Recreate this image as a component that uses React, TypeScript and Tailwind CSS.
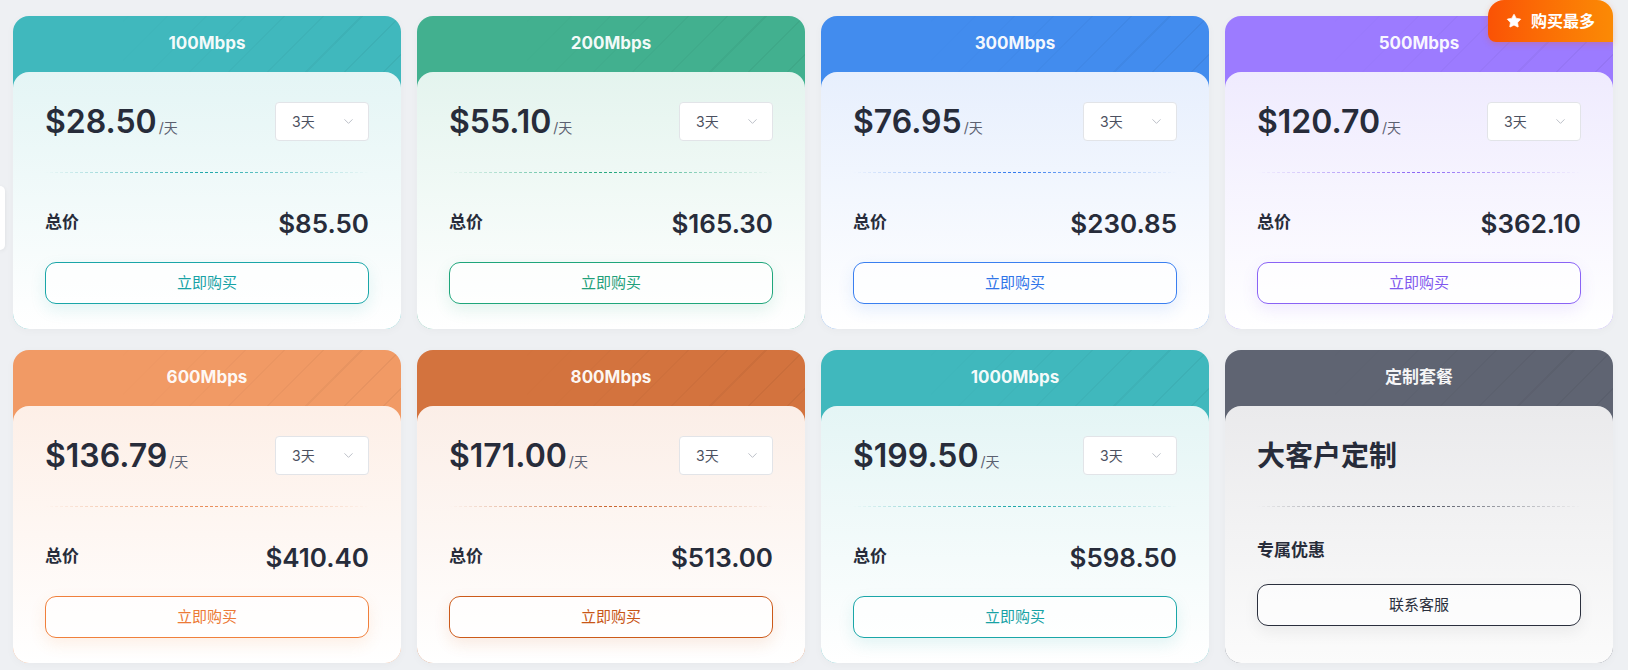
import { ChevronDown, Star } from "lucide-react";

type Theme = {
  head: string;
  body: string;
  line: string;
  btn: string;
};

const themes: Record<string, Theme> = {
  teal: {
    head: "bg-[#40b8bd]",
    body: "bg-linear-to-b from-[#e4f5f5] to-white",
    line: "bg-[repeating-linear-gradient(90deg,#1aa6a8_0_3px,transparent_3px_5px)]",
    btn: "border-[#1aa6a8] text-[#17a2a5] shadow-[0_6px_16px_rgba(26,166,168,0.12)]",
  },
  green: {
    head: "bg-[#42b08f]",
    body: "bg-linear-to-b from-[#e4f4ee] to-white",
    line: "bg-[repeating-linear-gradient(90deg,#1fa67b_0_3px,transparent_3px_5px)]",
    btn: "border-[#1fa67b] text-[#1fa07a] shadow-[0_6px_16px_rgba(31,166,123,0.12)]",
  },
  blue: {
    head: "bg-[#428cee]",
    body: "bg-linear-to-b from-[#e7effd] to-white",
    line: "bg-[repeating-linear-gradient(90deg,#2f78ee_0_3px,transparent_3px_5px)]",
    btn: "border-[#3a7ff0] text-[#2f74e8] shadow-[0_6px_16px_rgba(47,120,238,0.12)]",
  },
  purple: {
    head: "bg-[#9c7bff]",
    body: "bg-linear-to-b from-[#efebfe] to-white",
    line: "bg-[repeating-linear-gradient(90deg,#8a63f5_0_3px,transparent_3px_5px)]",
    btn: "border-[#8a63f5] text-[#8058ee] shadow-[0_6px_16px_rgba(138,99,245,0.12)]",
  },
  orange: {
    head: "bg-[#f19a65]",
    body: "bg-linear-to-b from-[#fdefe7] to-white",
    line: "bg-[repeating-linear-gradient(90deg,#e98a55_0_3px,transparent_3px_5px)]",
    btn: "border-[#f0803c] text-[#ec7a36] shadow-[0_6px_16px_rgba(240,128,60,0.12)]",
  },
  rust: {
    head: "bg-[#d3733e]",
    body: "bg-linear-to-b from-[#fbeee7] to-white",
    line: "bg-[repeating-linear-gradient(90deg,#c8632c_0_3px,transparent_3px_5px)]",
    btn: "border-[#cc5a1a] text-[#c85616] shadow-[0_6px_16px_rgba(204,90,26,0.12)]",
  },
  gray: {
    head: "bg-[#5f6472]",
    body: "bg-linear-to-b from-[#eaeaec] to-[#fbfbfb]",
    line: "bg-[repeating-linear-gradient(90deg,#4b4f5c_0_3px,transparent_3px_5px)]",
    btn: "border-[#2a2f3d] text-[#2a2f3d] shadow-[0_6px_16px_rgba(0,0,0,0.06)]",
  },
};

const plans = [
  { name: "100Mbps", price: "28.50", total: "85.50", theme: "teal" },
  { name: "200Mbps", price: "55.10", total: "165.30", theme: "green" },
  { name: "300Mbps", price: "76.95", total: "230.85", theme: "blue" },
  { name: "500Mbps", price: "120.70", total: "362.10", theme: "purple", hot: true },
  { name: "600Mbps", price: "136.79", total: "410.40", theme: "orange" },
  { name: "800Mbps", price: "171.00", total: "513.00", theme: "rust" },
  { name: "1000Mbps", price: "199.50", total: "598.50", theme: "teal" },
];

function CardShell({ name, t, children }: { name: string; t: Theme; children: React.ReactNode }) {
  return (
    <div className={`relative h-full rounded-2xl overflow-hidden flex flex-col shadow-[0_2px_10px_rgba(0,0,0,0.03)] ${t.head}`}>
      <div className="absolute inset-x-0 top-0 h-[72px] bg-[repeating-linear-gradient(135deg,transparent_0_26px,rgba(0,0,0,0.045)_26px_27.5px)] [mask-image:linear-gradient(90deg,transparent_25%,#000)]" />
      <div className="relative h-[56px] flex items-center justify-center text-[17px] font-bold text-white/95">
        {name}
      </div>
      <div className={`relative flex-1 rounded-t-2xl px-8 pt-[30px] pb-[25px] flex flex-col ${t.body}`}>
        {children}
      </div>
    </div>
  );
}

function Divider({ t }: { t: Theme }) {
  return (
    <div className={`mt-[31px] h-px w-full ${t.line} [mask-image:linear-gradient(90deg,transparent,#000_50%,transparent)]`} />
  );
}

function PlanCard({ plan }: { plan: (typeof plans)[number] }) {
  const t = themes[plan.theme];
  return (
    <div className="relative">
      <CardShell name={plan.name} t={t}>
        <div className="h-[39px] flex items-center justify-between">
          <div className="flex items-baseline text-[#272c3a]">
            <span className="text-[32px] font-semibold leading-none">${plan.price}</span>
            <span className="ml-0.5 text-[14px] text-[#5b6070]">/天</span>
          </div>
          <div className="w-[94px] h-[39px] bg-white border border-[#e2e4e8] rounded-[4px] flex items-center justify-between pl-4 pr-3 text-[14px] text-[#4b5060]">
            <span>3天</span>
            <ChevronDown size={15} strokeWidth={1.5} className="text-[#b8bcc4]" />
          </div>
        </div>
        <Divider t={t} />
        <div className="mt-[34px] h-8 flex items-center justify-between text-[#272c3a]">
          <span className="text-[17px] font-semibold">总价</span>
          <span className="text-[26px] font-semibold">${plan.total}</span>
        </div>
        <button className={`mt-[23px] h-[42px] w-full rounded-[11px] border bg-white/60 text-[15px] ${t.btn}`}>
          立即购买
        </button>
      </CardShell>
      {plan.hot && (
        <div className="absolute -top-4 right-0 h-[42px] w-[125px] flex items-center pl-[18px] gap-[9px] rounded-t-2xl rounded-bl-lg bg-linear-to-r from-[#fa5205] to-[#fb8a05] text-white text-[16px] font-bold shadow-[0_2px_6px_rgba(250,82,5,0.25)]">
          <Star size={16} fill="currentColor" strokeWidth={1} />
          <span>购买最多</span>
        </div>
      )}
    </div>
  );
}

function CustomCard() {
  const t = themes.gray;
  return (
    <div className="relative">
      <CardShell name="定制套餐" t={t}>
        <div className="h-[39px] flex items-center text-[28px] font-bold text-[#272c3a]">大客户定制</div>
        <Divider t={t} />
        <div className="mt-[34px] h-5 flex items-center text-[17px] font-semibold text-[#272c3a]">专属优惠</div>
        <button className={`mt-[23px] h-[42px] w-full rounded-[11px] border bg-white/60 text-[15px] ${t.btn}`}>
          联系客服
        </button>
      </CardShell>
    </div>
  );
}

export default function App() {
  return (
    <div className="relative min-h-[670px] bg-[#eef0f3] pl-[13px] pr-[15px] pt-4 pb-[7px] font-['Inter','Noto_Sans_CJK_SC',sans-serif]">
      <div className="absolute left-0 top-[186px] w-[5px] h-[64px] bg-white rounded-r-md shadow-[0_1px_4px_rgba(0,0,0,0.08)]" />
      <div className="grid grid-cols-4 gap-x-4 gap-y-[21px]">
        {plans.map((p) => (
          <PlanCard key={p.name} plan={p} />
        ))}
        <CustomCard />
      </div>
    </div>
  );
}
